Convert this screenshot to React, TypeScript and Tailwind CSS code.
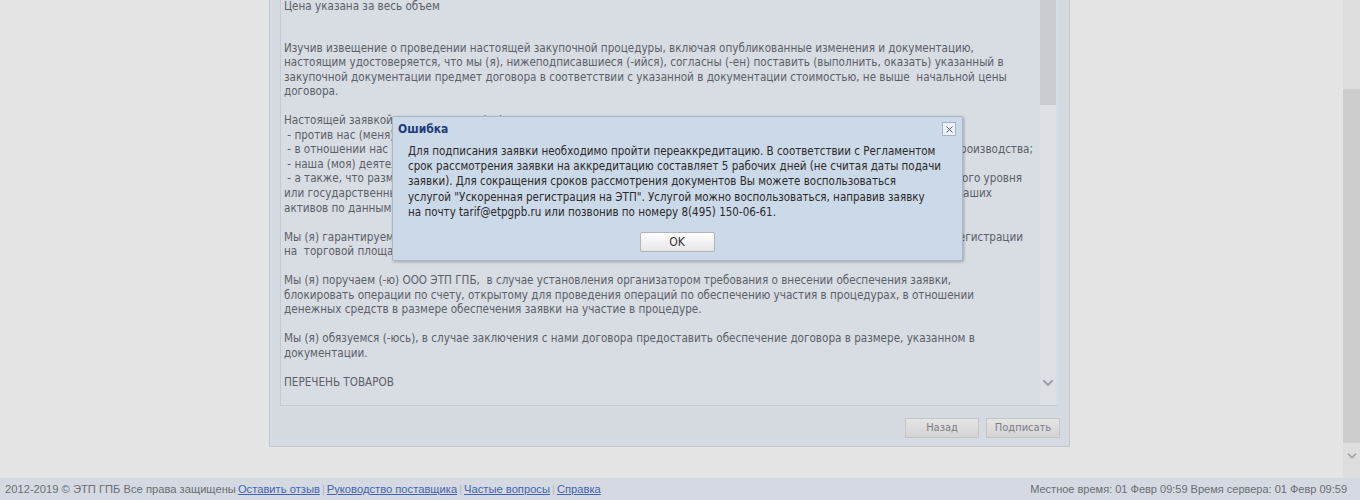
import { X, ChevronDown } from "lucide-react";

type Line = string | { l: string; r: string; w: string };

// lines partly under the dialog: left part, right part, right edge via width
const paragraphs: Line[][] = [
  ["Цена указана за весь объем"],
  [
    "Изучив извещение о проведении настоящей закупочной процедуры, включая опубликованные изменения и документацию,",
    "настоящим удостоверяется, что мы (я), нижеподписавшиеся (-ийся), согласны (-ен) поставить (выполнить, оказать) указанный в",
    "закупочной документации предмет договора в соответствии с указанной в документации стоимостью, не выше  начальной цены",
    "договора.",
  ],
  [
    "Настоящей заявкой подтверждаем (-ю), что:",
    " - против нас (меня) не проводится процедура ликвидации;",
    { l: " - в отношении нас (меня) не проводится процедура банкротства,", r: "не приостановлена в порядке производства;", w: "w-[749px]" },
    " - наша (моя) деятельность не приостановлена;",
    { l: " - а также, что размер задолженности по начисленным налогам,", r: "в бюджеты любого уровня", w: "w-[738px]" },
    { l: "или государственные внебюджетные фонды за прошедший", r: "балансовой стоимости наших", w: "w-[708px]" },
    "активов по данным бухгалтерской отчетности за последний период.",
  ],
  [
    { l: "Мы (я) гарантируем достоверность представленной нами", r: "подтверждаем актуальность регистрации", w: "w-[739px]" },
    "на  торговой площадке.",
  ],
  [
    "Мы (я) поручаем (-ю) ООО ЭТП ГПБ,  в случае установления организатором требования о внесении обеспечения заявки,",
    "блокировать операции по счету, открытому для проведения операций по обеспечению участия в процедурах, в отношении",
    "денежных средств в размере обеспечения заявки на участие в процедуре.",
  ],
  [
    "Мы (я) обязуемся (-юсь), в случае заключения с нами договора предоставить обеспечение договора в размере, указанном в",
    "документации.",
  ],
  ["ПЕРЕЧЕНЬ ТОВАРОВ"],
];

const dialogText = [
  "Для подписания заявки необходимо пройти переаккредитацию. В соответствии с Регламентом",
  "срок рассмотрения заявки на аккредитацию составляет 5 рабочих дней (не считая даты подачи",
  "заявки). Для сокращения сроков рассмотрения документов Вы можете воспользоваться",
  "услугой \"Ускоренная регистрация на ЭТП\". Услугой можно воспользоваться, направив заявку",
  "на почту tarif@etpgpb.ru или позвонив по номеру 8(495) 150-06-61.",
];

const links = ["Оставить отзыв", "Руководство поставщика", "Частые вопросы", "Справка"];

export default function App() {
  return (
    <div className="relative flex h-[500px] w-[1360px] flex-col overflow-hidden bg-[#e5e5e5] font-['Liberation_Sans',Arial,sans-serif]">
      <div className="flex h-[478px]">
        <div className="flex-1">
          {/* main panel, top is scrolled off */}
          <div className="ml-[269px] flex h-[447px] w-[801px] flex-col border-b border-l border-r border-[#c3c7ce] bg-[#d6dbe2] pl-[10px] pr-[12px]">
            <div className="flex h-[406px] border-b border-l border-[#c5c9d0] bg-[#d8dce3]">
              <div className="min-w-0 flex-1 overflow-hidden whitespace-pre pl-[3px] text-[11.6px] leading-[14.55px] text-[#5b6068] font-['DejaVu_Sans_Condensed','Liberation_Sans',sans-serif] -mt-[1px]">
                {paragraphs.map((p, i) => (
                  <div key={i} className={i === 0 ? "mb-[27px]" : "mb-[14.55px]"}>
                    {p.map((line, j) =>
                      typeof line === "string" ? (
                        <div key={j}>{line}</div>
                      ) : (
                        <div key={j} className={`flex justify-between ${line.w}`}>
                          <span>{line.l}</span>
                          <span>{line.r}</span>
                        </div>
                      )
                    )}
                  </div>
                ))}
              </div>
              <div className="flex w-[16px] flex-col bg-[#dde0e5]">
                <div className="h-[105px] bg-[#c9cbcf]" />
                <div className="flex-1" />
                <ChevronDown className="mb-[14px] h-[16px] w-[16px] text-[#9ea2a8]" strokeWidth={3} />
              </div>
              <div className="w-[1px]" />
            </div>
            <div className="-mr-[3px] flex justify-end gap-[7px] pt-[12px]">
              <button className="h-[20px] w-[74px] border border-[#c3c5c9] bg-gradient-to-b from-[#e4e4e4] to-[#d4d4d4] text-[11px] text-[#7a7d82] font-['DejaVu_Sans_Condensed',sans-serif]">
                Назад
              </button>
              <button className="h-[20px] w-[74px] border border-[#c3c5c9] bg-gradient-to-b from-[#e4e4e4] to-[#d4d4d4] text-[11px] text-[#7a7d82] font-['DejaVu_Sans_Condensed',sans-serif]">
                Подписать
              </button>
            </div>
          </div>
        </div>
        {/* page scrollbar */}
        <div className="flex w-[17px] flex-col bg-[#dedede]">
          <div className="h-[89px]" />
          <div className="h-[354px] bg-[#cdcdcd]" />
          <div className="flex flex-1 items-start justify-center pt-[6px]">
            <ChevronDown className="h-[14px] w-[14px] text-[#a3a3a3]" strokeWidth={3} />
          </div>
        </div>
      </div>

      {/* footer */}
      <div className="flex h-[22px] items-center justify-between bg-[#d5dae2] pl-[5px] pr-[13px] text-[11.2px] text-[#6a6d72]">
        <div className="flex items-center">
          <span>2012-2019 © ЭТП ГПБ Все права защищены</span>
          {links.map((l, i) => (
            <span key={l} className="flex items-center">
              {i > 0 ? <span className="mx-[2px] text-[#b0b4bb]">|</span> : <span className="w-[2px]" />}
              <a href="#" className="text-[#4363b0] underline">
                {l}
              </a>
            </span>
          ))}
        </div>
        <span className="text-[11px]">Местное время: 01 Февр 09:59 Время сервера: 01 Февр 09:59</span>
      </div>

      {/* error dialog */}
      <div className="absolute left-[392px] top-[116px] h-[145px] w-[571px] rounded-[2px] border border-[#a9b6c6] bg-[#ccd9e8] shadow-[1px_1px_3px_rgba(0,0,0,0.25)]">
        <div className="flex items-center justify-between pl-[5px] pr-[6px] pt-[3px]">
          <span className="text-[12px] font-bold text-[#1c3c7a] font-['DejaVu_Sans_Condensed',sans-serif]">Ошибка</span>
          <button className="flex h-[14px] w-[14px] items-center justify-center border border-[#a7b3c3] bg-[#eef2f7]">
            <X className="h-[11px] w-[11px] text-[#3a4f75]" strokeWidth={2} />
          </button>
        </div>
        <div className="mt-[6px] whitespace-nowrap pl-[15px] text-[11.5px] leading-[15.2px] text-[#2a2a2a] font-['DejaVu_Sans_Condensed',sans-serif]">
          {dialogText.map((l, i) => (
            <div key={i}>{l}</div>
          ))}
        </div>
        <div className="mt-[12px] flex justify-center pr-[1px]">
          <button className="h-[20px] w-[75px] rounded-[2px] border border-[#b1b5bb] bg-gradient-to-b from-[#ffffff] to-[#e6e6e6] text-[12px] text-[#333] font-['DejaVu_Sans_Condensed',sans-serif]">
            OK
          </button>
        </div>
      </div>
    </div>
  );
}
